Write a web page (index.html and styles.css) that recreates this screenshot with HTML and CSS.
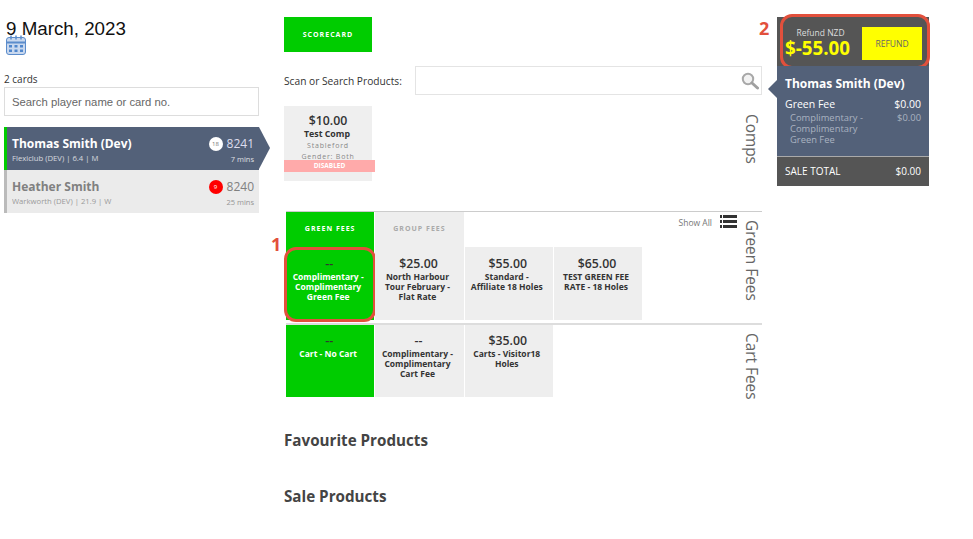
FILE: index.html
```html
<!DOCTYPE html>
<html lang="en">
<head>
  <meta charset="UTF-8" />
  <title>Point of Sale</title>
  <link rel="stylesheet" href="styles.css">
</head>
<body>
  <div class="players">
    <div class="date">9 March, 2023</div>
    <svg class="calendar" width="21" height="20" viewBox="0 0 21 20">
      <rect x="0.5" y="2.5" width="19" height="17" rx="2.5" fill="#c9d8ee" stroke="#5b8ccb"/>
      <path d="M1 7.5h18" stroke="#5b8ccb" stroke-width="2"/>
      <path d="M5 0.5v4M10 0.5v4M15 0.5v4" stroke="#5b8ccb" stroke-width="1.5"/>
      <g fill="#4f86cc">
        <rect x="3" y="10" width="3" height="2.5"/><rect x="8.5" y="10" width="3" height="2.5"/><rect x="14" y="10" width="3" height="2.5"/>
        <rect x="3" y="14.5" width="3" height="2.5"/><rect x="8.5" y="14.5" width="3" height="2.5"/><rect x="14" y="14.5" width="3" height="2.5"/>
      </g>
    </svg>
    <div class="card-count">2 cards</div>
    <input class="player-search" type="text" placeholder="Search player name or card no.">
    <div class="player-list">
      <div class="player active">
        <div class="player-info">
          <div class="player-name">Thomas Smith (Dev)</div>
          <div class="player-meta">Flexiclub (DEV) | 6.4 | M</div>
        </div>
        <div class="player-side">
          <div class="player-card"><span class="holes">18</span>8241</div>
          <div class="player-time">7 mins</div>
        </div>
      </div>
      <div class="player">
        <div class="player-info">
          <div class="player-name">Heather Smith</div>
          <div class="player-meta">Warkworth (DEV) | 21.9 | W</div>
        </div>
        <div class="player-side">
          <div class="player-card"><span class="holes red">9</span>8240</div>
          <div class="player-time">25 mins</div>
        </div>
      </div>
    </div>
  </div>

  <div class="products">
    <button class="scorecard">SCORECARD</button>
    <div class="search-row">
      <label class="search-label">Scan or Search Products:</label>
      <div class="search-box">
        <svg width="18" height="18" viewBox="0 0 18 18">
          <circle cx="7" cy="7" r="5.2" fill="#f2f2f2" stroke="#a8a8a8" stroke-width="2"/>
          <path d="M11 11l5.5 5" stroke="#a0a0a0" stroke-width="3" stroke-linecap="round"/>
        </svg>
      </div>
    </div>

    <div class="comps">
      <div class="comp-tile">
        <div class="price">$10.00</div>
        <div class="name">Test Comp</div>
        <div class="comp-line">Stableford</div>
        <div class="comp-line">Gender: Both</div>
        <div class="disabled-band">DISABLED</div>
      </div>
      <div class="side-label">Comps</div>
    </div>

    <div class="fee-section green-fees">
      <div class="fee-main">
        <div class="tabs">
          <div class="tab selected">GREEN FEES</div>
          <div class="tab">GROUP FEES</div>
          <div class="show-all">Show All
            <svg width="17" height="13" viewBox="0 0 17 13">
              <path d="M0 0h2v3H0zM3 0h14v3H3zM0 5h2v3H0zM3 5h14v3H3zM0 10h2v3H0zM3 10h14v3H3z" fill="#333"/>
            </svg>
          </div>
        </div>
        <div class="tiles">
          <div class="tile selected">
            <div class="price">--</div>
            <div class="name">Complimentary - Complimentary Green Fee</div>
            <div class="marker"><span class="marker-no one">1</span></div>
          </div>
          <div class="tile">
            <div class="price">$25.00</div>
            <div class="name">North Harbour Tour February - Flat Rate</div>
          </div>
          <div class="tile">
            <div class="price">$55.00</div>
            <div class="name">Standard - Affiliate 18 Holes</div>
          </div>
          <div class="tile">
            <div class="price">$65.00</div>
            <div class="name">TEST GREEN FEE RATE - 18 Holes</div>
          </div>
        </div>
      </div>
      <div class="side-label">Green Fees</div>
    </div>

    <div class="fee-section cart-fees">
      <div class="fee-main">
        <div class="tiles">
          <div class="tile selected">
            <div class="price">--</div>
            <div class="name">Cart - No Cart</div>
          </div>
          <div class="tile">
            <div class="price">--</div>
            <div class="name">Complimentary - Complimentary Cart Fee</div>
          </div>
          <div class="tile">
            <div class="price">$35.00</div>
            <div class="name">Carts - Visitor18 Holes</div>
          </div>
        </div>
      </div>
      <div class="side-label">Cart Fees</div>
    </div>

    <h2 class="group-title favourite">Favourite Products</h2>
    <h2 class="group-title">Sale Products</h2>
  </div>

  <div class="sale">
    <div class="refund">
      <div class="refund-amount">
        <div class="refund-label">Refund NZD</div>
        <div class="refund-value">$-55.00</div>
      </div>
      <button class="refund-btn">REFUND</button>
      <div class="marker wide"><span class="marker-no two">2</span></div>
    </div>
    <div class="sale-player">
      <div class="sale-name">Thomas Smith (Dev)</div>
      <div class="sale-row"><span>Green Fee</span><span>$0.00</span></div>
      <div class="sale-row sub"><span>Complimentary - Complimentary Green Fee</span><span>$0.00</span></div>
    </div>
    <div class="sale-total"><span>SALE TOTAL</span><span>$0.00</span></div>
  </div>
</body>
</html>
```

FILE: styles.css
```css
body {
  margin: 0;
  padding-left: 4px;
  display: flex;
  align-items: flex-start;
  font-family: "Open Sans", sans-serif;
  background: #fff;
  color: #333;
}

button {
  font-family: inherit;
  border: none;
  cursor: pointer;
}

/* left column */
.players {
  width: 255px;
  margin-right: 25px;
  position: relative;
}

.date {
  font-family: "Liberation Sans", sans-serif;
  font-size: 18.75px;
  line-height: 23px;
  color: #111;
  margin: 17px 0 0 2px;
}

.calendar {
  display: block;
  margin: -5px 0 0 2px;
  position: relative;
}

.card-count {
  font-size: 10px;
  line-height: 13px;
  margin-top: 18px;
  color: #333;
}

.player-search {
  display: block;
  box-sizing: border-box;
  width: 255px;
  height: 29px;
  margin-top: 1px;
  padding: 0 7px;
  border: 1px solid #ddd;
  font-family: "Liberation Sans", sans-serif;
  font-size: 11.3px;
  outline: none;
}

.player-search::placeholder {
  color: #666;
}

.player-list {
  margin-top: 11px;
}

.player {
  box-sizing: border-box;
  height: 43px;
  display: flex;
  justify-content: space-between;
  padding: 9px 5px 0 5px;
  background: #ebebeb;
  border-left: 3px solid #bbb;
  color: #808080;
  position: relative;
}

.player.active {
  background: #536179;
  border-left-color: #00cc00;
  color: #fff;
}

.player.active::after {
  content: "";
  position: absolute;
  left: 100%;
  top: 0;
  border-left: 11px solid #536179;
  border-top: 21.5px solid transparent;
  border-bottom: 21.5px solid transparent;
}

.player-name {
  font-size: 12px;
  font-weight: 700;
  line-height: 15px;
}

.player-meta {
  font-size: 7.7px;
  line-height: 10px;
  margin-top: 2px;
  opacity: 0.75;
}

.player-side {
  text-align: right;
}

.player-card {
  display: flex;
  align-items: center;
  justify-content: flex-end;
  gap: 4px;
  font-size: 12px;
  line-height: 15px;
}

.player.active .player-card {
  color: #dde;
}

.holes {
  width: 14px;
  height: 14px;
  border-radius: 50%;
  background: #fff;
  color: #777;
  font-size: 6px;
  line-height: 14px;
  text-align: center;
}

.holes.red {
  background: #f00;
  color: #fff;
}

.player-time {
  font-size: 7.5px;
  line-height: 10px;
  margin-top: 3px;
  opacity: 0.8;
}

/* middle column */
.products {
  width: 478px;
  margin-right: 15px;
  padding-top: 17px;
}

.scorecard {
  display: block;
  width: 88px;
  height: 35px;
  padding: 0;
  background: #00cc00;
  color: #fff;
  font-size: 7px;
  font-weight: 700;
  letter-spacing: 1px;
}

.search-row {
  display: flex;
  align-items: center;
  margin-top: 14px;
}

.search-label {
  width: 131px;
  font-size: 10.2px;
  color: #333;
}

.search-box {
  box-sizing: border-box;
  flex: 1;
  height: 29px;
  border: 1px solid #e4e4e4;
  display: flex;
  align-items: center;
  justify-content: flex-end;
  padding-right: 2px;
}

.comps {
  display: flex;
  justify-content: space-between;
  margin-top: 11px;
  margin-bottom: 30px;
}

.comp-tile {
  width: 88px;
  height: 75px;
  background: #efefef;
  text-align: center;
  padding-top: 7px;
  box-sizing: border-box;
  position: relative;
}

.comp-tile .price {
  font-size: 12.3px;
  line-height: 15px;
  padding-right: 0;
}

.comp-tile .name {
  font-size: 8.8px;
  line-height: 11px;
  margin-top: 1px;
  padding: 0 2px 0 0;
}

.comp-line {
  font-size: 7px;
  line-height: 11px;
  letter-spacing: 0.8px;
  color: #888;
}

.disabled-band {
  position: absolute;
  left: 0;
  top: 54px;
  width: 91px;
  height: 12px;
  background: #ffaaaa;
  color: #fff;
  font-size: 6.5px;
  font-weight: 700;
  line-height: 12px;
}

.side-label {
  writing-mode: vertical-rl;
  font-size: 15.4px;
  line-height: 18px;
  color: #666;
  padding-top: 8px;
  margin-right: 2px;
}

.fee-section {
  display: flex;
  justify-content: space-between;
  margin-left: 2px;
  border-top: 1px solid #ccc;
}

.cart-fees {
  border-top: 2px solid #ddd;
  margin-top: 3px;
}

.cart-fees .tile {
  height: 72px;
  padding-top: 8px;
}

.fee-main {
  width: 452px;
}

.tabs {
  display: flex;
  height: 35px;
  position: relative;
}

.tab {
  width: 88.3px;
  margin-right: 1px;
  background: #eee;
  color: #aaa;
  font-size: 7px;
  font-weight: 700;
  letter-spacing: 1px;
  text-align: center;
  line-height: 34px;
}

.tab.selected {
  background: #00cc00;
  color: #fff;
}

.show-all {
  position: absolute;
  right: 1px;
  top: 3px;
  display: flex;
  align-items: flex-start;
  gap: 8px;
  font-size: 8.5px;
  line-height: 15px;
  color: #777;
}

.tiles {
  display: grid;
  grid-template-columns: repeat(4, 88.3px);
  gap: 1px;
}

.tile {
  height: 73px;
  background: #eee;
  text-align: center;
  padding-top: 9px;
  box-sizing: border-box;
  position: relative;
}

.price {
  font-size: 12.3px;
  font-weight: 600;
  line-height: 16px;
  padding-right: 2px;
  color: #333;
}

.name {
  font-size: 8.5px;
  font-weight: 700;
  line-height: 10px;
  padding: 0 7px 0 3px;
  color: #333;
}

.tile.selected {
  background: #00cc00;
}

.tile.selected .name {
  color: #fff;
}

.marker {
  position: absolute;
  inset: 0 -2px -2px -2px;
  border: 3px solid #e2503c;
  border-radius: 12px;
}

.marker.wide {
  inset: -3px -1px -3px 3px;
}

.marker-no {
  position: absolute;
  font-size: 18px;
  font-weight: 700;
  line-height: 18px;
  color: #e2503c;
}

.marker-no.one {
  left: -16px;
  top: -15px;
}

.marker-no.two {
  left: -24px;
  top: 2px;
}

.group-title {
  font-size: 15.2px;
  font-weight: 700;
  line-height: 19px;
  color: #444;
  margin: 0 0 37px;
}

.group-title.favourite {
  margin-top: 31px;
}

/* right column */
.sale {
  width: 152px;
  margin-top: 17px;
  position: relative;
  color: #fff;
}

.refund {
  height: 49px;
  background: #555;
  display: flex;
  justify-content: space-between;
  padding: 10px 7px 0 8px;
  box-sizing: border-box;
  position: relative;
}

.refund-label {
  font-size: 8.5px;
  line-height: 11px;
  padding-left: 6px;
  text-align: center;
  color: #ddd;
}

.refund-value {
  font-size: 18.8px;
  font-weight: 700;
  line-height: 20px;
  color: #ffff00;
}

.refund-btn {
  width: 60px;
  height: 33px;
  padding: 0;
  background: #ffff00;
  color: #666;
  font-size: 8.5px;
}

.sale-player {
  background: #536179;
  padding: 10px 8px 0;
  height: 91px;
  box-sizing: border-box;
  border-bottom: 1px solid #aaa;
  position: relative;
}

.sale-player::before {
  content: "";
  position: absolute;
  right: 100%;
  top: 14px;
  border-right: 9px solid #536179;
  border-top: 9px solid transparent;
  border-bottom: 9px solid transparent;
}

.sale-name {
  font-size: 12px;
  font-weight: 700;
  line-height: 16px;
  margin-bottom: 5px;
}

.sale-row {
  display: flex;
  justify-content: space-between;
  font-size: 10.5px;
  line-height: 14px;
}

.sale-row.sub {
  padding-left: 5px;
  margin-top: 1px;
  font-size: 9.4px;
  line-height: 11px;
  color: #a9b2c0;
}

.sale-row.sub span:first-child {
  width: 80px;
}

.sale-total {
  height: 29px;
  box-sizing: border-box;
  background: #555;
  display: flex;
  justify-content: space-between;
  align-items: center;
  padding: 0 8px 1px;
  font-size: 10px;
}
```
